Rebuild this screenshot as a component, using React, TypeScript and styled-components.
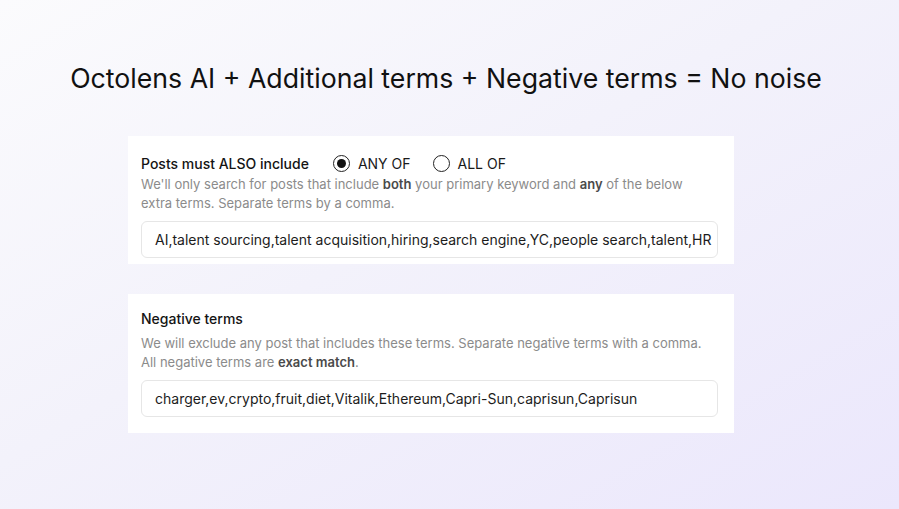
import React from "react";
import styled, { createGlobalStyle } from "styled-components";

const Global = createGlobalStyle`
  html, body { margin: 0; padding: 0; }
  body {
    font-family: Inter, "Noto Sans", sans-serif;
    -webkit-font-smoothing: antialiased;
  }
`;

const Page = styled.div`
  width: 899px;
  height: 509px;
  box-sizing: border-box;
  background: linear-gradient(150deg, #fbfbfd 0%, #f3f2fb 45%, #ebe7fc 100%);
  display: flex;
  flex-direction: column;
  align-items: center;
  padding-top: 61px;
`;

const Title = styled.h1`
  margin: 0;
  font-size: 26.7px;
  font-weight: 400;
  color: #111;
  line-height: 34px;
  letter-spacing: 0;
  margin-left: -7px;
`;

const Stack = styled.div`
  display: flex;
  flex-direction: column;
  gap: 30px;
  margin-top: 41px;
  margin-left: -37px;
`;

const Card = styled.section<{ $padTop: number; $padBottom: number }>`
  width: 606px;
  box-sizing: border-box;
  background: #fff;
  padding: ${(p) => p.$padTop}px 16px ${(p) => p.$padBottom}px 13px;
  display: flex;
  flex-direction: column;
`;

const HeaderRow = styled.div`
  display: flex;
  align-items: center;
  height: 20px;
`;

const Label = styled.span`
  font-size: 14px;
  font-weight: 500;
  color: #141414;
`;

const RadioGroup = styled.div`
  display: flex;
  align-items: center;
  gap: 22px;
  margin-left: 24px;
`;

const RadioOption = styled.label`
  display: flex;
  align-items: center;
  gap: 8px;
  font-size: 14px;
  color: #1a1a1a;
`;

const RadioCircle = styled.span<{ $checked: boolean }>`
  width: 17px;
  height: 17px;
  box-sizing: border-box;
  border-radius: 50%;
  border: 1.5px solid #222;
  display: flex;
  align-items: center;
  justify-content: center;
  &::after {
    content: "";
    width: 9px;
    height: 9px;
    border-radius: 50%;
    background: ${(p) => (p.$checked ? "#111" : "transparent")};
  }
`;

const Description = styled.p<{ $top: number }>`
  margin: ${(p) => p.$top}px 0 0 0;
  font-size: 13px;
  line-height: 18.5px;
  color: #8b8b8b;
  b {
    font-weight: 600;
    color: #4a4a4a;
  }
`;

const Field = styled.div`
  margin-top: 9px;
  height: 37px;
  box-sizing: border-box;
  border: 1px solid #e6e6e6;
  border-radius: 6px;
  display: flex;
  align-items: center;
  padding: 0 0 0 13px;
  overflow: hidden;
  white-space: nowrap;
  font-size: 14px;
  color: #1c1c1c;
`;

export default function App() {
  return (
    <>
      <Global />
      <Page>
        <Title>Octolens AI + Additional terms + Negative terms = No noise</Title>
        <Stack>
          <Card $padTop={17} $padBottom={6}>
            <HeaderRow>
              <Label>Posts must ALSO include</Label>
              <RadioGroup>
                <RadioOption>
                  <RadioCircle $checked={true} />
                  ANY OF
                </RadioOption>
                <RadioOption>
                  <RadioCircle $checked={false} />
                  ALL OF
                </RadioOption>
              </RadioGroup>
            </HeaderRow>
            <Description $top={2}>
              We'll only search for posts that include <b>both</b> your primary keyword and <b>any</b> of the below
              <br />
              extra terms. Separate terms by a comma.
            </Description>
            <Field>AI,talent sourcing,talent acquisition,hiring,search engine,YC,people search,talent,HR</Field>
          </Card>
          <Card $padTop={14} $padBottom={16}>
            <HeaderRow>
              <Label>Negative terms</Label>
            </HeaderRow>
            <Description $top={6}>
              We will exclude any post that includes these terms. Separate negative terms with a comma.
              <br />
              All negative terms are <b>exact match</b>.
            </Description>
            <Field>charger,ev,crypto,fruit,diet,Vitalik,Ethereum,Capri-Sun,caprisun,Caprisun</Field>
          </Card>
        </Stack>
      </Page>
    </>
  );
}
